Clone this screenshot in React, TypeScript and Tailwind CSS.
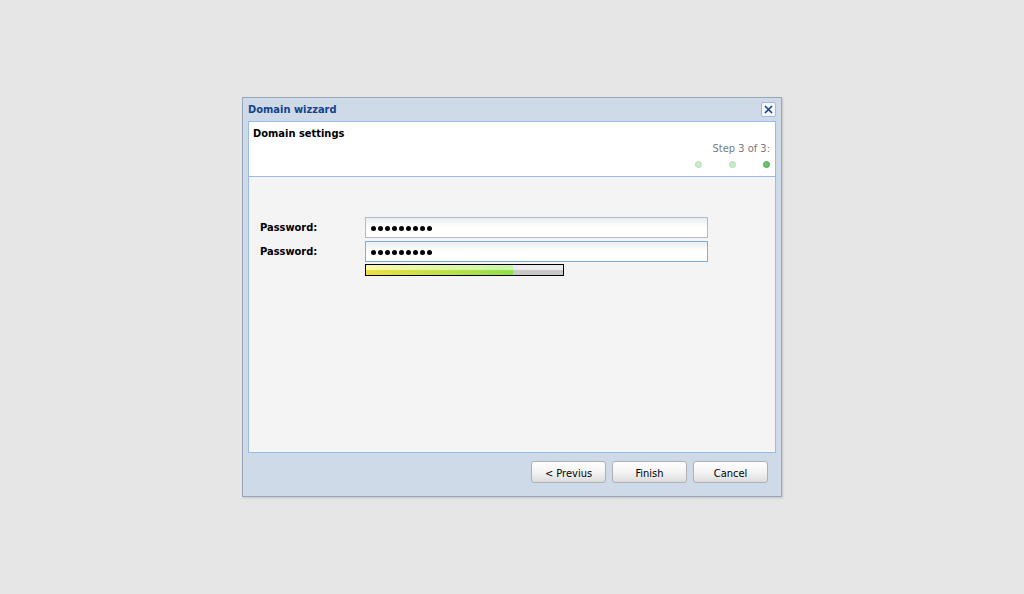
import React from 'react';

const font = { fontFamily: '"DejaVu Sans", "Liberation Sans", sans-serif' };

function StepDot({ active }: { active?: boolean }) {
  return (
    <span
      className={`block w-[7px] h-[7px] rounded-full border ${
        active ? 'bg-[#6cc36c] border-[#5aa85a]' : 'bg-[#c8ecc8] border-[#b5deb5]'
      }`}
    />
  );
}

function PasswordField({ focused }: { focused?: boolean }) {
  const borderCls = focused ? 'border-[#7eadd9]' : 'border-[#b5b8c8]';
  return (
    <div
      className={`w-[343px] h-[21px] border ${borderCls} flex items-center gap-[2px] pl-[5px] pt-[1px] bg-gradient-to-b from-[#e9eef2] via-white to-white`}
    >
      {Array.from({ length: 9 }).map((_, i) => (
        <span key={i} className="block w-[5px] h-[5px] rounded-full bg-black" />
      ))}
    </div>
  );
}

function WizardButton({ label }: { label: string }) {
  return (
    <button className="w-[75px] h-[22px] pt-[2px] rounded-[3px] border border-[#b0b0b0] bg-gradient-to-b from-white via-[#f4f4f4] to-[#dcdcdc] text-[11px] text-black leading-none font-stretch-condensed">
      {label}
    </button>
  );
}

export default function App() {
  return (
    <div className="h-[594px] w-full bg-[#e6e6e6] flex items-center justify-center font-stretch-condensed" style={font}>
      <div className="w-[540px] h-[400px] border border-[#99a6ba] bg-[#cedae7] flex flex-col shadow-[1px_1px_2px_rgba(0,0,0,0.15)]">
        {/* Title bar */}
        <div className="h-[23px] flex items-center justify-between pl-[5px] pr-[5px]">
          <span className="text-[11px] font-bold text-[#15428b] mt-[1px]">Domain wizzard</span>
          <button className="w-[15px] h-[15px] rounded-[2px] border border-[#99bbe8] bg-[#f3f7fb] flex items-center justify-center">
            <svg width="9" height="9" viewBox="0 0 9 9">
              <path d="M1 1 L8 8 M8 1 L1 8" stroke="#15428b" strokeWidth="1.6" />
            </svg>
          </button>
        </div>

        {/* Panel */}
        <div className="ml-[5px] w-[528px] h-[332px] border border-[#99bbe8] flex flex-col">
          <div className="h-[55px] bg-white border-b border-[#99bbe8] px-[4px] pt-[5px] flex flex-col">
            <div className="text-[11px] leading-[14px] font-bold text-black">Domain settings</div>
            <div className="text-right text-[11px] leading-[14px] text-[#7a7a7a] mt-[1px] pr-[1px]">Step 3 of 3:</div>
            <div className="flex justify-end gap-[27px] mt-[5px] pr-[1px]">
              <StepDot />
              <StepDot />
              <StepDot active />
            </div>
          </div>
          <div className="flex-1 bg-[#f4f4f4] pt-[40px] pl-[11px]">
            <div className="flex items-center h-[21px]">
              <span className="w-[105px] text-[11px] font-bold text-black mt-[1px]">Password:</span>
              <PasswordField />
            </div>
            <div className="flex items-center h-[21px] mt-[3px]">
              <span className="w-[105px] text-[11px] font-bold text-black mt-[1px]">Password:</span>
              <PasswordField focused />
            </div>
            <div className="ml-[105px] mt-[2px] w-[199px] h-[12px] border border-black flex">
              <div className="w-[147px] h-full flex flex-col">
                <div className="h-1/2 bg-gradient-to-r from-[#fafaa8] to-[#c8f5a8]" />
                <div className="h-1/2 bg-gradient-to-r from-[#ede040] to-[#8ee04c]" />
              </div>
              <div className="flex-1 h-full flex flex-col">
                <div className="h-1/2 bg-[#ececec]" />
                <div className="h-1/2 bg-[#c8c8c8]" />
              </div>
            </div>
          </div>
        </div>

        {/* Footer */}
        <div className="flex-1 flex justify-end items-start gap-[6px] pt-[8px] pr-[13px]">
          <WizardButton label="< Previus" />
          <WizardButton label="Finish" />
          <WizardButton label="Cancel" />
        </div>
      </div>
    </div>
  );
}
